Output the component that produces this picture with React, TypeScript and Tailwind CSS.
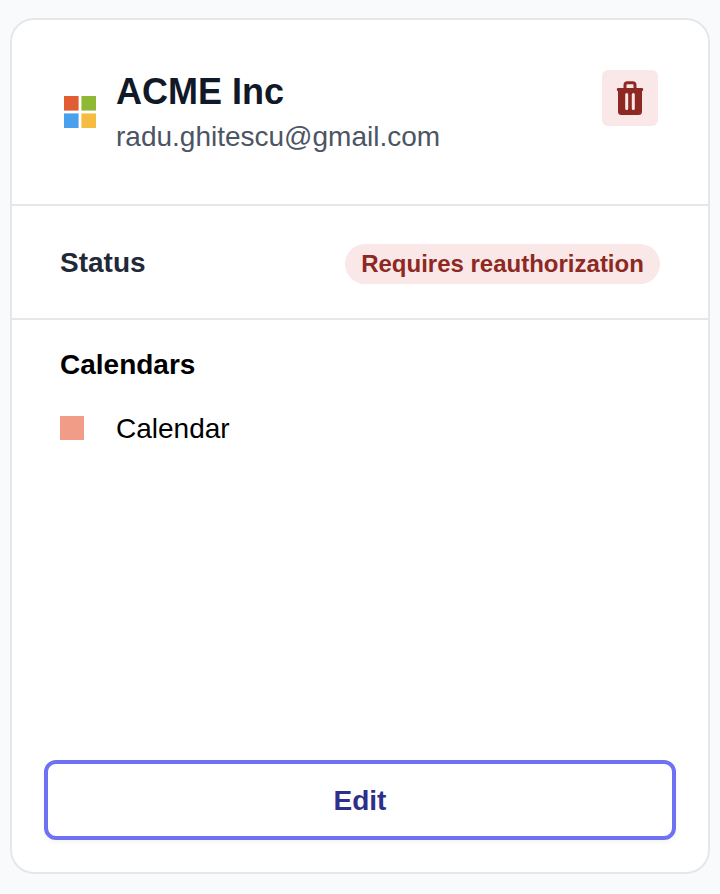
export default function App() {
  return (
    <div className="h-[894px] w-[720px] overflow-hidden bg-[#f9fafb] pt-[18px] pl-[10px] font-['Liberation_Sans',Arial,sans-serif]">
      <article className="flex h-[856px] w-[700px] flex-col rounded-[24px] border-2 border-[#e5e7eb] bg-white">
        <header className="flex h-[186px] items-start border-b-2 border-[#e5e7eb] pt-[50px] pr-[50px] pl-[52px]">
          <svg className="mt-[26px] h-8 w-8" viewBox="0 0 32 32">
            <path fill="#e15d34" d="M0 0h14.6v14.6H0z" />
            <path fill="#8fb935" d="M17.4 0H32v14.6H17.4z" />
            <path fill="#4aa0eb" d="M0 17.4h14.6V32H0z" />
            <path fill="#f5bc41" d="M17.4 17.4H32V32H17.4z" />
          </svg>
          <div className="ml-5 flex-1">
            <h1 className="text-[36px] leading-[44px] font-bold text-[#111827]">ACME Inc</h1>
            <p className="mt-[3px] text-[28px] leading-10 text-[#4b5563]">radu.ghitescu@gmail.com</p>
          </div>
          <button aria-label="Delete" className="flex h-14 w-14 items-center justify-center rounded-[6px] bg-[#f9e8e7]">
            <svg className="h-9 w-7" viewBox="0 0 28 36" fill="none">
              <path d="M9 9V5q0-2.3 2.3-2.3h5.4Q19 2.700 19 5v4" stroke="#8e2823" strokeWidth="3" />
              <path d="M1.800 8h24.400q1 0 1 1.500t-1 1.500H26v20.500q0 3.500-3.500 3.500h-17Q2 35 2 31.500V11h-.2q-1 0-1-1.500t1-1.500z" fill="#8e2823" />
              <path d="M10.700 14.500v14M17.300 14.500v14" stroke="#f9e8e7" strokeWidth="3" strokeLinecap="round" />
            </svg>
          </button>
        </header>
        <section className="flex h-[114px] items-center justify-between border-b-2 border-[#e5e7eb] px-12">
          <h2 className="mt-0.5 text-[28px] leading-10 font-bold text-[#1f2937]">Status</h2>
          <span className="mt-1 flex h-10 w-[315px] items-center justify-center rounded-full bg-[#f9e8e7] text-[24px] leading-8 font-bold text-[#8e2823]">Requires reauthorization</span>
        </section>
        <section className="flex flex-1 flex-col px-8 pt-[25px] pb-8">
          <h2 className="ml-4 text-[28px] leading-10 font-bold text-black">Calendars</h2>
          <div className="mt-6 ml-4 flex items-start gap-8">
            <span className="mt-[7px] h-6 w-6 bg-[#f19c87]" />
            <span className="text-[28px] leading-10 text-black">Calendar</span>
          </div>
          <button className="mt-auto h-20 w-full rounded-[12px] border-4 border-[#6e72f2] pt-0.5 text-[28px] leading-10 font-bold text-[#2e2e8b] shadow-[0_2px_4px_rgba(0,0,0,0.05)]">Edit</button>
        </section>
      </article>
    </div>
  );
}
